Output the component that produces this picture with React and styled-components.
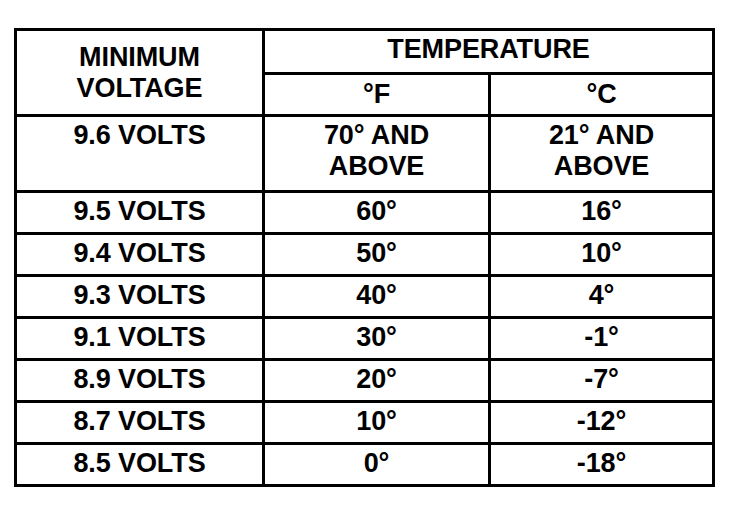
import React from 'react';
import styled, { createGlobalStyle } from 'styled-components';

const GlobalStyle = createGlobalStyle`
  html, body {
    margin: 0;
    padding: 0;
    background: #ffffff;
  }
`;

const Page = styled.div`
  padding: 28px 0 0 14px;
  font-family: 'Liberation Sans', Arial, sans-serif;
  color: #000;
`;

// the black background shows through the gaps as the rules of the chart
const Chart = styled.div`
  display: grid;
  grid-template-columns: 245px 223px 221px;
  grid-template-rows: 41px 39px 73px repeat(7, 39px);
  gap: 3px;
  padding: 3px;
  width: max-content;
  background: #000;
`;

const Cell = styled.div`
  background: #fff;
  display: flex;
  flex-direction: column;
  align-items: center;
  justify-content: ${(p) => (p.$head ? 'center' : 'flex-start')};
  padding-top: ${(p) => (p.$head ? '0' : '3px')};
  padding-bottom: ${(p) => p.$lift || '0'};
  grid-row: ${(p) => p.$rows || 'auto'};
  grid-column: ${(p) => p.$cols || 'auto'};
  box-sizing: border-box;
`;

const Label = styled.span`
  font-size: 27px;
  font-weight: bold;
  line-height: 31px;
  letter-spacing: -0.1px;
  text-align: center;
  white-space: nowrap;
`;

const rows = [
  ['9.5 VOLTS', '60°', '16°'],
  ['9.4 VOLTS', '50°', '10°'],
  ['9.3 VOLTS', '40°', '4°'],
  ['9.1 VOLTS', '30°', '-1°'],
  ['8.9 VOLTS', '20°', '-7°'],
  ['8.7 VOLTS', '10°', '-12°'],
  ['8.5 VOLTS', '0°', '-18°'],
];

export default function App() {
  return (
    <Page>
      <GlobalStyle />
      <Chart>
        <Cell $head $rows="span 2">
          <Label>MINIMUM</Label>
          <Label>VOLTAGE</Label>
        </Cell>
        <Cell $head $cols="span 2" $lift="4px">
          <Label>TEMPERATURE</Label>
        </Cell>
        <Cell $head>
          <Label>°F</Label>
        </Cell>
        <Cell $head>
          <Label>°C</Label>
        </Cell>

        <Cell>
          <Label>9.6 VOLTS</Label>
        </Cell>
        <Cell>
          <Label>70° AND</Label>
          <Label>ABOVE</Label>
        </Cell>
        <Cell>
          <Label>21° AND</Label>
          <Label>ABOVE</Label>
        </Cell>

        {rows.map((r) =>
          r.map((text, i) => (
            <Cell key={r[0] + i}>
              <Label>{text}</Label>
            </Cell>
          ))
        )}
      </Chart>
    </Page>
  );
}
